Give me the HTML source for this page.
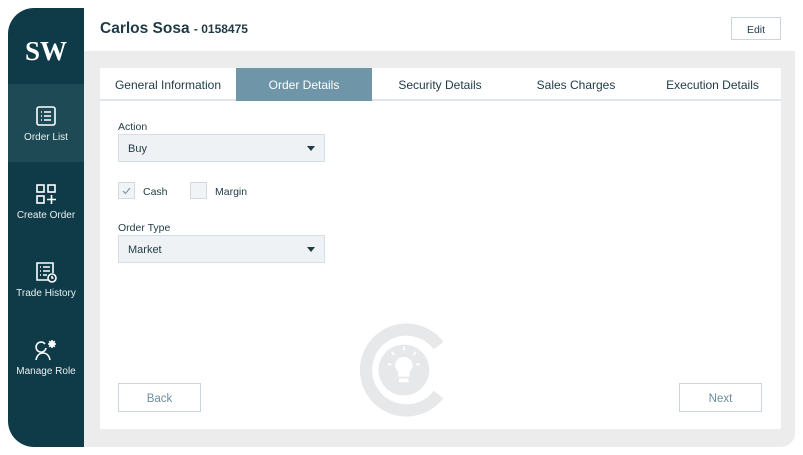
<!DOCTYPE html>
<html><head><meta charset="utf-8"><style>
*{margin:0;padding:0;box-sizing:border-box}
body{width:803px;height:455px;background:#fff;font-family:"Liberation Sans",sans-serif;position:relative;overflow:hidden;color:#1f3a45}
.abs{position:absolute}
#side{left:8px;top:8px;width:76px;height:439px;background:#0f3a47;border-radius:26px 0 0 26px}
.logo{left:0;top:28px;width:76px;text-align:center;color:#fff;font-family:"Liberation Serif",serif;font-weight:bold;font-size:27px}
.nav{left:0;width:76px;height:78px;text-align:center;color:#e8f0f2;font-size:10px}
.nav svg{display:block;margin:0 auto 5px}
#gray{left:84px;top:51px;width:711px;height:396px;background:#ececec;border-radius:0 0 14px 0}
#panel{left:100px;top:68px;width:681px;height:361px;background:#fff}
.tabs{left:0;top:0;width:681px;height:33px;border-bottom:2px solid #dde6ea}
.tab{top:0;height:33px;line-height:34px;text-align:center;font-size:12px;color:#1f3a45}
.lbl{font-size:10.5px;color:#1f3a45}
.sel{width:207px;height:28px;background:#eef2f4;border:1px solid #d6dfe3;font-size:11px;line-height:28px;padding-left:9px}
.sel:after{content:"";position:absolute;right:9px;top:11px;border-left:4px solid transparent;border-right:4px solid transparent;border-top:5px solid #1f3a45}
.cb{width:17px;height:17px;border:1px solid #cfd9de;background:#f1f4f6}
.btn{width:83px;height:29px;border:1px solid #c9d6dc;background:#fff;text-align:center;line-height:30px;font-size:11.5px;color:#6c8e9c}
</style></head><body>
<div id="side" class="abs">
 <div class="abs logo">SW</div>
 <div class="abs" style="left:0;top:76px;width:76px;height:78px;background:#1d4a55"></div>
 <div class="abs nav" style="top:97px">
  <svg width="22" height="22" viewBox="0 0 22 22" fill="none" stroke="#fff" stroke-width="1.6"><rect x="2" y="2" width="18" height="18" rx="2"/><path d="M6 7h1M9 7h7M6 11h1M9 11h7M6 15h1M9 15h7"/></svg>Order List</div>
 <div class="abs nav" style="top:175px">
  <svg width="22" height="22" viewBox="0 0 22 22" fill="none" stroke="#fff" stroke-width="1.6"><rect x="2" y="2" width="7" height="7"/><rect x="13" y="2" width="7" height="7"/><rect x="2" y="13" width="7" height="7"/><path d="M16.5 12v9M12 16.5h9"/></svg>Create Order</div>
 <div class="abs nav" style="top:253px">
  <svg width="24" height="22" viewBox="0 0 24 22" fill="none" stroke="#fff" stroke-width="1.6"><path d="M15 19H3V2h16v10"/><path d="M6 6h1M9 6h7M6 10h1M9 10h7M6 14h1M9 14h4"/><circle cx="18" cy="17" r="4"/><path d="M18 15v2h1.5"/></svg>Trade History</div>
 <div class="abs nav" style="top:331px">
  <svg width="24" height="22" viewBox="0 0 24 22" fill="none" stroke="#fff" stroke-width="1.6"><path d="M11 5a5 5 0 1 0 1 4"/><path d="M2 21c1-5 4-7 7-7s6 2 7 7"/><circle cx="18" cy="5" r="2.2" fill="#fff"/><path d="M18 1v8M14 5h8M15.2 2.2l5.6 5.6M20.8 2.2l-5.6 5.6"/></svg>Manage Role</div>
</div>
<div class="abs" style="left:100px;top:20px;font-size:15.5px;font-weight:bold;color:#1f3a45">Carlos Sosa <span style="font-size:12px">- 0158475</span></div>
<div class="abs btn" style="left:731px;top:17px;width:50px;height:23px;line-height:24px;font-size:10.5px;color:#1f3a45">Edit</div>
<div id="gray" class="abs"></div>
<div id="panel" class="abs">
 <div class="abs tabs"></div>
 <div class="abs tab" style="left:0;width:136px">General Information</div>
 <div class="abs tab" style="left:136px;width:136px;background:#6f96a8;color:#fff">Order Details</div>
 <div class="abs tab" style="left:272px;width:136px">Security Details</div>
 <div class="abs tab" style="left:408px;width:136px">Sales Charges</div>
 <div class="abs tab" style="left:544px;width:137px">Execution Details</div>
 <div class="abs lbl" style="left:18px;top:53px">Action</div>
 <div class="abs sel" style="left:18px;top:66px">Buy</div>
 <div class="abs cb" style="left:18px;top:114px"><svg width="15" height="15" viewBox="0 0 15 15" fill="none" stroke="#6c8e9c" stroke-width="1"><path d="M4 8l2.5 2.5L11 5"/></svg></div>
 <div class="abs lbl" style="left:43px;top:118px">Cash</div>
 <div class="abs cb" style="left:90px;top:114px"></div>
 <div class="abs lbl" style="left:115px;top:118px">Margin</div>
 <div class="abs lbl" style="left:18px;top:154px">Order Type</div>
 <div class="abs sel" style="left:18px;top:167px">Market</div>
 <svg class="abs" style="left:254px;top:255px" width="94" height="94" viewBox="0 0 100 100">
  <path d="M90 24A43 43 0 1 0 90 76" fill="none" stroke="#e6e8e9" stroke-width="13"/>
  <circle cx="53" cy="50" r="27" fill="#e6e8e9"/>
  <path d="M53 36a9 9 0 0 0-6 16v5h12v-5a9 9 0 0 0-6-16z" fill="#fff"/>
  <rect x="48" y="59" width="10" height="4" fill="#fff"/>
  <path d="M53 25v4M40 31l3 3M66 31l-3 3M36 44h4M66 44h4" stroke="#fff" stroke-width="2"/>
 </svg>
 <div class="abs btn" style="left:18px;top:315px">Back</div>
 <div class="abs btn" style="left:579px;top:315px">Next</div>
</div>
</body></html>
